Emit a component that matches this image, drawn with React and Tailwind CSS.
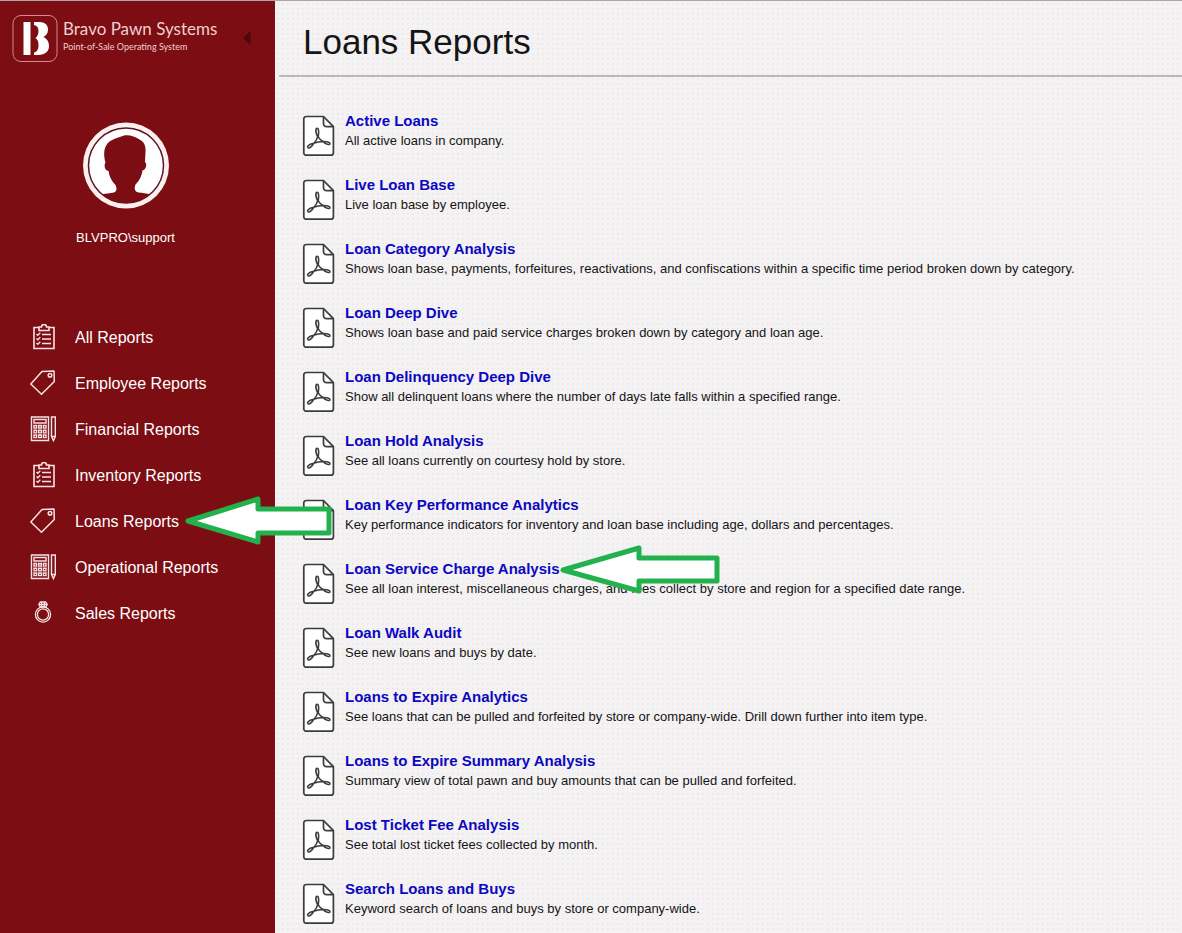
import React from 'react';

const reports = [
  { title: 'Active Loans', text: 'All active loans in company.' },
  { title: 'Live Loan Base', text: 'Live loan base by employee.' },
  { title: 'Loan Category Analysis', text: 'Shows loan base, payments, forfeitures, reactivations, and confiscations within a specific time period broken down by category.' },
  { title: 'Loan Deep Dive', text: 'Shows loan base and paid service charges broken down by category and loan age.' },
  { title: 'Loan Delinquency Deep Dive', text: 'Show all delinquent loans where the number of days late falls within a specified range.' },
  { title: 'Loan Hold Analysis', text: 'See all loans currently on courtesy hold by store.' },
  { title: 'Loan Key Performance Analytics', text: 'Key performance indicators for inventory and loan base including age, dollars and percentages.' },
  { title: 'Loan Service Charge Analysis', text: 'See all loan interest, miscellaneous charges, and fees collect by store and region for a specified date range.', marked: true },
  { title: 'Loan Walk Audit', text: 'See new loans and buys by date.' },
  { title: 'Loans to Expire Analytics', text: 'See loans that can be pulled and forfeited by store or company-wide. Drill down further into item type.' },
  { title: 'Loans to Expire Summary Analysis', text: 'Summary view of total pawn and buy amounts that can be pulled and forfeited.' },
  { title: 'Lost Ticket Fee Analysis', text: 'See total lost ticket fees collected by month.' },
  { title: 'Search Loans and Buys', text: 'Keyword search of loans and buys by store or company-wide.' },
];

function ClipboardIcon() {
  return (
    <svg width="28" height="28" viewBox="0 1 28 28" fill="none" stroke="#f6e3e4" strokeWidth="1.6">
      <path d="M10 4.500H5v21h20v-21h-5" />
      <path d="M10 7.500V4h2.500c0-3.500 5-3.500 5 0H20v3.500z" />
      <path d="M13 11.500h9M13 16h9M13 20.500h9" />
      <path d="M7.500 11l1.300 1.300 2.500-2.600M7.500 15.500l1.300 1.300 2.500-2.600M7.500 20l1.300 1.300 2.500-2.600" strokeWidth="1.3" />
    </svg>
  );
}

function TagIcon() {
  return (
    <svg width="28" height="28" viewBox="0 1 28 28" fill="none" stroke="#f6e3e4" strokeWidth="1.5" strokeLinejoin="round">
      <path d="M13 2.500 25 2 25.300 12.500 12.500 25.200 1.800 15z" />
      <circle cx="21" cy="6.300" r="1.800" />
    </svg>
  );
}

function CalculatorIcon() {
  return (
    <svg width="28" height="28" viewBox="0 1 28 28" fill="none" stroke="#f6e3e4" strokeWidth="1.4">
      <path d="M2.500 2h17v23.500h-17zM5 4.500h12V8H5z" />
      <path d="M5 10.500h2.600v2.600H5zM9.700 10.500h2.600v2.600H9.700zM14.400 10.500H17v2.600h-2.600zM5 15.300h2.600v2.600H5zM9.700 15.300h2.600v2.600H9.700zM14.400 15.300H17v2.600h-2.600zM5 20h2.600v2.600H5zM9.700 20h2.600v2.600H9.700zM14.400 20H17v2.600h-2.600z" />
      <path d="M22.500 2h3.800v19.500l-1.900 4-1.900-4zM22.500 21.500h3.800" />
    </svg>
  );
}

function RingIcon() {
  return (
    <svg width="28" height="28" viewBox="0 1 28 28" fill="none" stroke="#f6e3e4" strokeWidth="1.300">
      <circle cx="14" cy="15.500" r="7.600" />
      <circle cx="14" cy="15.500" r="5.600" />
      <path d="M11.300 8 9.800 5.500 11.300 3h5.400l1.500 2.500L16.700 8zM10 5.500h8M12.700 3v5M15.300 3v5" />
    </svg>
  );
}

function PdfIcon() {
  return (
    <svg width="34" height="42" viewBox="0 0 34 42" fill="none" stroke="#3c3c3c" strokeLinejoin="round" className="shrink-0">
      <path d="M4.500 1.500H21.500l9.900 10.200v26a2.500 2.500 0 0 1-2.500 2.500H4.500A2.500 2.500 0 0 1 1.800 37.700V4a2.500 2.500 0 0 1 2.700-2.500z" fill="#fff" strokeWidth="1.700" />
      <path d="M21.500 1.500v7.200a3 3 0 0 0 3 3h6.900" strokeWidth="1.700" />
      <path d="M15.600 21.500C13.500 18 13.300 13.300 15.100 13.300s1.900 4.500 1 8.200M15.600 21.500c-.2 2.300-1.700 4.800-4 7M16.100 21.500c1 2 2.700 3.800 4.900 5M11.600 28.300c3-1.200 6-1.800 9.400-1.800M11.600 28.300c-1.500 3.200-4.400 5.600-5.600 4.300-1.200-1.500 2-3.500 5.600-4.300M21 26.500c3.800-.2 7.300.8 7 2.300-.3 1.500-4.300.7-7-2.300" strokeWidth="1.600" />
    </svg>
  );
}

function Logo() {
  return (
    <svg width="46" height="50" viewBox="0 0 46 50" className="shrink-0">
      <rect x="1" y="2.500" width="44" height="46" rx="8" fill="none" stroke="#d38b90" strokeWidth="1" />
      <path d="M11.500 9H18.500v33h-7z" fill="#fff" />
      <path d="M22 9H27c6 0 9 3 9 7.500 0 4-2 6-4.500 7.500 3.500 1.500 5.500 4.500 5.500 9 0 5.500-4 9-10.500 9h-4.500v-2.500c3-.5 4.500-3 4.500-7 0-4-1-6-3-7.500 2-1.500 3-4 3-7 0-3.500-1.500-5.500-4.500-6z" fill="#fff" />
    </svg>
  );
}

function Avatar() {
  return (
    <svg width="88" height="88" viewBox="0 0 88 88">
      <circle cx="44" cy="43.500" r="43" fill="#fbeff0" />
      <circle cx="44" cy="43.500" r="37.500" fill="#fff" stroke="#5b1822" strokeWidth="1.500" />
      <path d="M20 72.500c4-1.200 8-1 12-2 3-1 3-4.500 1.500-7.500-4-4-6-8-7-14-3.500-.5-5-5.500-3-8.500-2-7-2-14 2-19 4.500-5 11-5.500 16.500-8 6-.8 11 1.200 15.500 4 5 2.500 6.500 7 6 12.500l-.5 10c2.500 2 1 8-2.500 8.500-1 6-3 10-7 14-1.500 4-1 7 3 8 4 .5 8 .5 11.500 2C62 78 54 81 44 81S26 78 20 72.500z" fill="#7b0d13" />
    </svg>
  );
}

function Arrow({ className, points, width, height }) {
  return (
    <svg width={width} height={height} className={`absolute pointer-events-none ${className}`} aria-hidden="true">
      <polygon points={points} fill="#fff" stroke="#22b14c" strokeWidth="5" strokeLinejoin="round" />
    </svg>
  );
}

const links = [
  { label: 'All Reports', Icon: ClipboardIcon },
  { label: 'Employee Reports', Icon: TagIcon },
  { label: 'Financial Reports', Icon: CalculatorIcon },
  { label: 'Inventory Reports', Icon: ClipboardIcon },
  { label: 'Loans Reports', Icon: TagIcon, marked: true },
  { label: 'Operational Reports', Icon: CalculatorIcon },
  { label: 'Sales Reports', Icon: RingIcon },
];

function Sidebar() {
  return (
    <aside className="relative z-10 w-[275px] shrink-0 bg-[#7b0d13] text-white">
      <div className="flex items-start pt-3 pl-3">
        <Logo />
        <div className="ml-[5px] mt-1 w-[160px] font-['Lato',sans-serif] text-[#f0cfd1]">
          <div className="text-[17px] leading-6">Bravo Pawn Systems</div>
          <div className="text-[9px] leading-3">Point-of-Sale Operating System</div>
        </div>
        <button type="button" aria-label="Collapse menu" className="ml-5 mt-[18px]">
          <svg width="8" height="14" viewBox="0 0 8 14"><path d="M7.500 0v14L0 7z" fill="#4d080d" /></svg>
        </button>
      </div>
      <div className="mt-[59px] flex w-[251px] flex-col items-center">
        <Avatar />
        <div className="mt-5 text-[13px] leading-4">BLVPRO\support</div>
      </div>
      <nav className="mt-[69px]">
        {links.map(({ label, Icon, marked }) => (
          <a key={label} href="#" className="relative flex h-[46px] items-center pl-[29px] text-[16px]">
            <Icon />
            <span className="ml-[18px]">{label}</span>
            {marked && <Arrow className="left-[183px] -top-[3px]" width="150" height="54" points="5,25 75,3 75,13 146,13 146,37 75,37 75,46" />}
          </a>
        ))}
      </nav>
    </aside>
  );
}

export default function App() {
  return (
    <div className="flex min-h-screen border-t border-[#aaa6a6] bg-[#f4f2f3] font-['Liberation_Sans',Arial,sans-serif]">
      <Sidebar />
      <main className="min-w-0 flex-1 bg-[radial-gradient(#ebe8e9_1px,transparent_1px)] bg-[size:5px_5px] pl-1">
        <header className="border-b-2 border-[#b9b7b8] pt-[19px] pb-[11px] pl-6">
          <h1 className="text-[35px] leading-[44px] text-[#151515]">Loans Reports</h1>
        </header>
        <ul className="pt-[34px] pl-[23px]">
          {reports.map((report) => (
            <li key={report.title} className="flex h-16 items-start gap-[9px]">
              <div className="pt-1"><PdfIcon /></div>
              <div className="relative">
                <a href="#" className="block w-fit text-[15px] font-bold leading-5 text-[#0c08c0]">
                  {report.title}
                </a>
                <p className="text-[13px] leading-5 text-[#151515]">{report.text}</p>
                {report.marked && <Arrow className="left-[212px] -top-[14px]" width="166" height="54" points="6,25 82,3 82,13 160,13 160,36 82,36 82,46" />}
              </div>
            </li>
          ))}
        </ul>
      </main>
    </div>
  );
}
